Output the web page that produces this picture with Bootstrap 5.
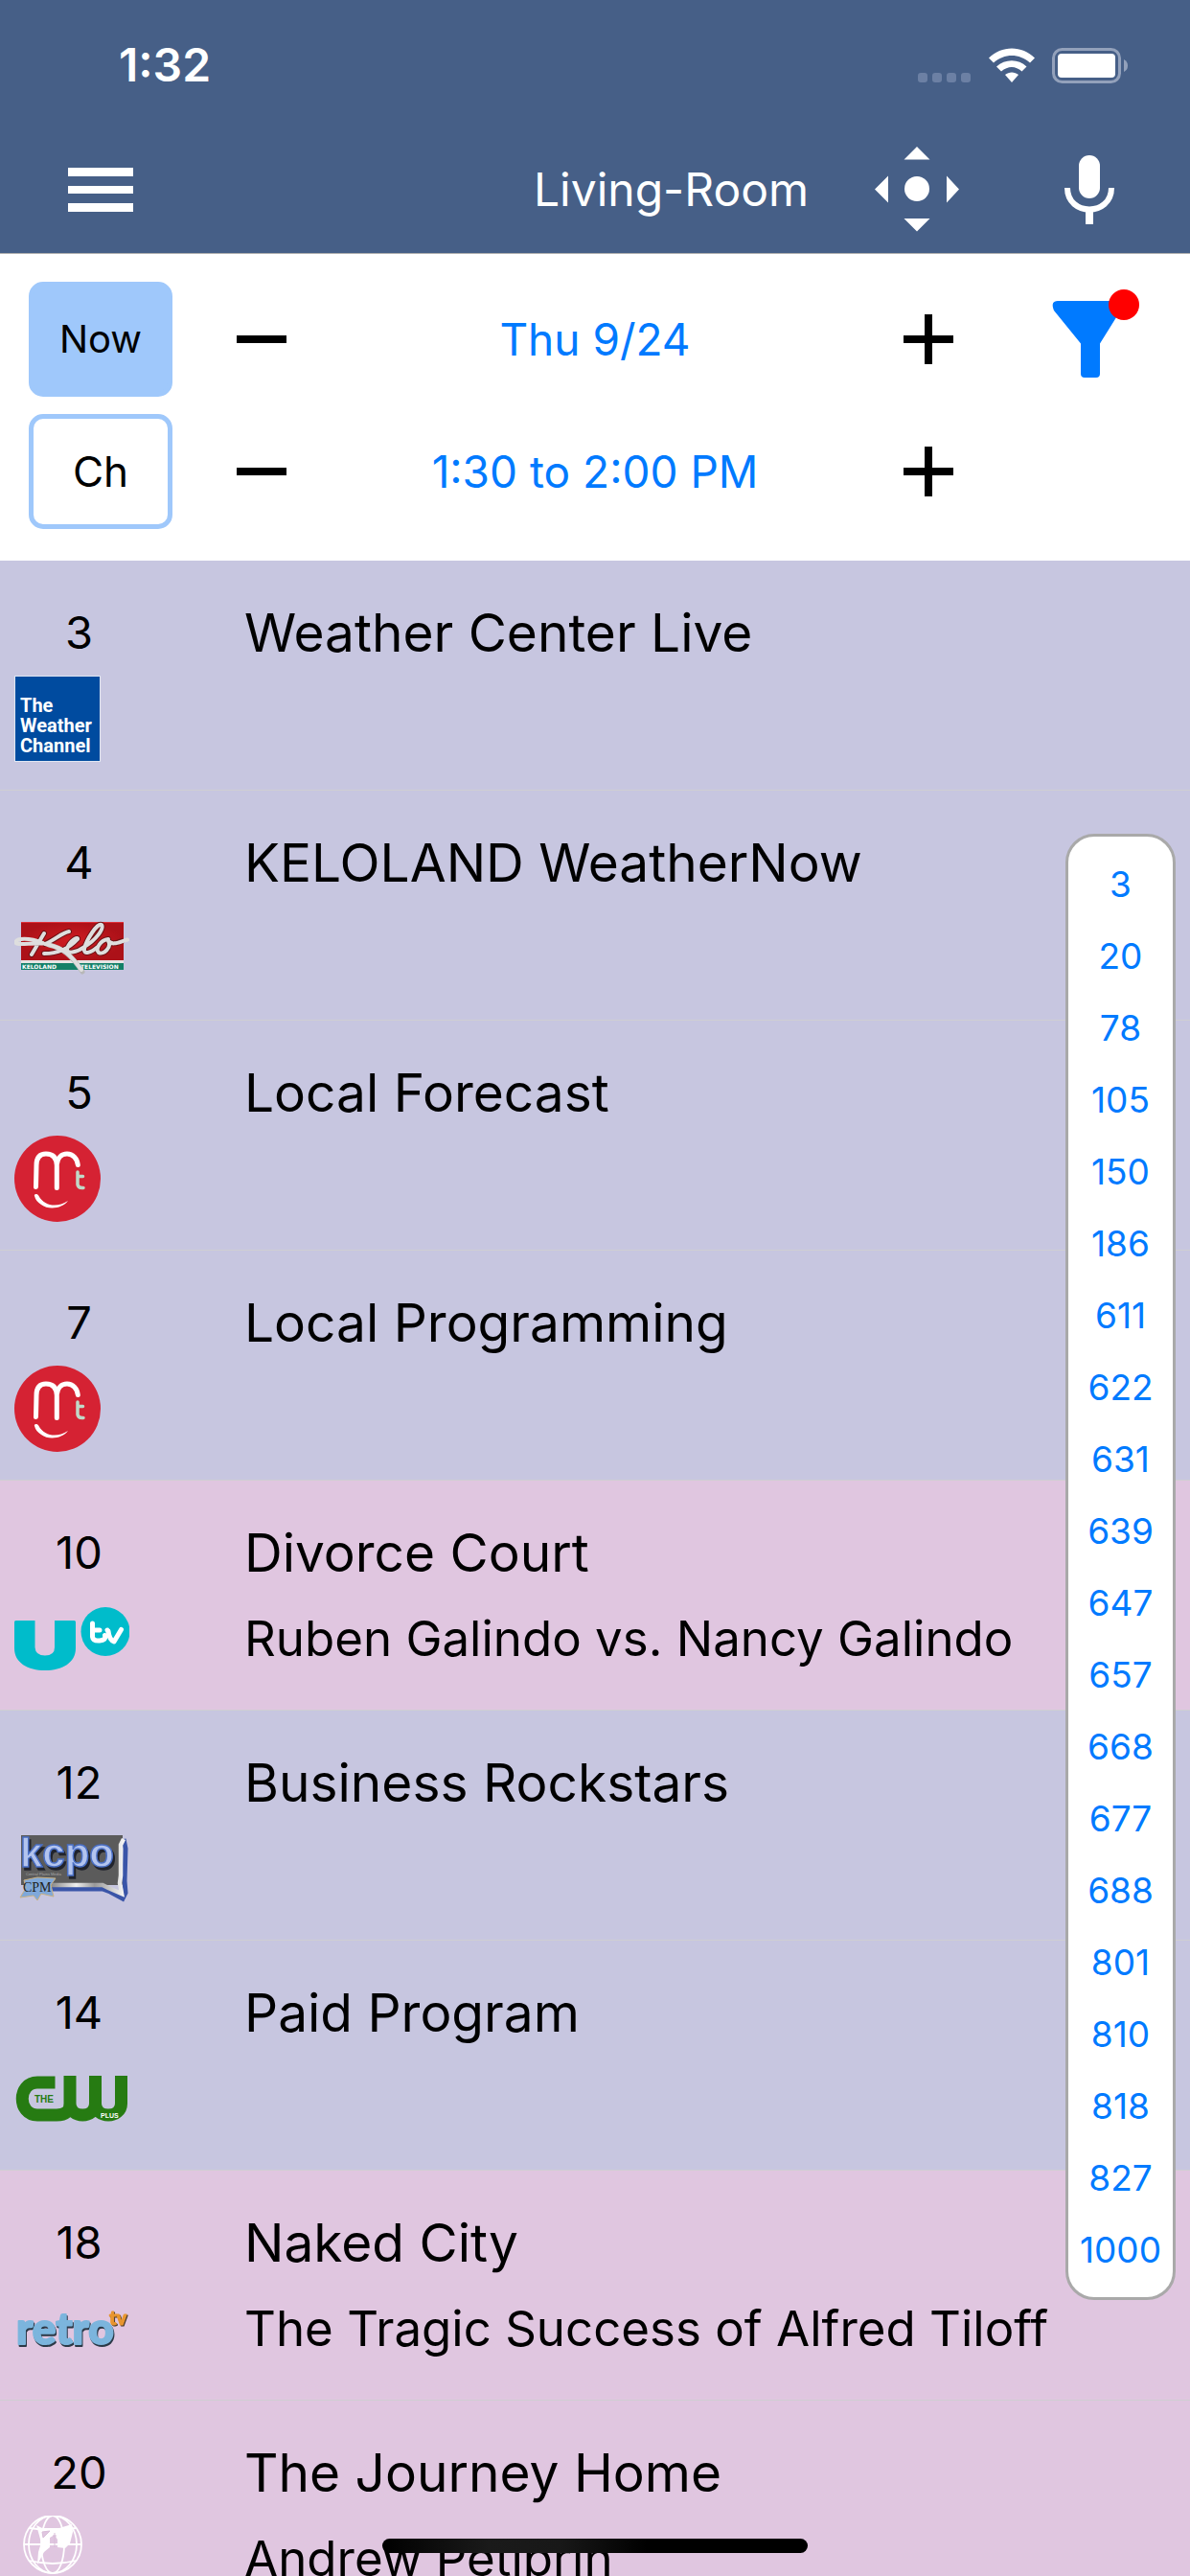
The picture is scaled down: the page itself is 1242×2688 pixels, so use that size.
<!DOCTYPE html>
<html lang="en">
<head>
<meta charset="utf-8">
<meta name="viewport" content="width=device-width, initial-scale=1">
<title>Living-Room</title>
<link rel="stylesheet" href="https://cdn.jsdelivr.net/npm/bootstrap@5.3.0/dist/css/bootstrap.min.css">
<style>
  body { font-family: Inter, "Liberation Sans", sans-serif; color: #000; }
  svg { display: block; flex: none; }
  .top-area { background: #465f87; }
  .status-bar { height: 132px; padding: 4px 64px 0 124px; }
  .clock { font-size: 48px; font-weight: 600; line-height: 60px; }
  .toolbar { height: 132px; padding: 0 30px; }
  .room-title { font-size: 48px; line-height: 60px; padding-right: 38px; }
  .icon-btn { width: 150px; height: 120px; padding: 0; border: 0; background: none; display: flex; align-items: center; justify-content: center; }
  .pad-btn { margin-right: 30px; }
  .controls { border-top: 1px solid #b0b0b0; padding: 29px 30px 33px; gap: 18px; }
  .mode-btn { width: 150px; height: 120px; border: 5px solid #9fc8fb; border-radius: 15px; background: #fff; color: #000; font-size: 44px; padding: 0; }
  .mode-btn.on { background: #9fc8fb; font-size: 40px; }
  .step-btn { width: 186px; }
  .range-link { color: #007aff; font-size: 46px; line-height: 60px; text-decoration: none; }
  .filter-dot { position: absolute; width: 32px; height: 32px; background: #f00; top: 8px; right: 23px; }
  .program { border: 0; border-bottom: 1px solid #cfcfd2; border-radius: 0 !important; background: #c7c6e0; color: #000; padding: 30px 15px 29px; gap: 105px; height: 240px; flex: none; }
  .program.movie { background: #e0c6e0; }
  .chan { width: 135px; flex: none; }
  .chan-no { font-size: 47px; line-height: 90px; }
  .show-name { font-size: 55px; line-height: 90px; font-weight: 400; margin: 0; }
  .episode { font-size: 51px; line-height: 90px; margin: 0; }
  .jump { position: absolute; top: 285px; right: 15px; width: 115px; border: 3px solid #a9a9a9; border-radius: 30px; padding: 12px 0; background: #fff; }
  .jump a { color: #007aff; font-size: 37px; line-height: 75px; text-decoration: none; text-align: center; }
  .home-bar { position: absolute; bottom: 24px; left: 50%; width: 444px; height: 15px; margin-left: -222px; border-radius: 8px; background: linear-gradient(90deg, #000, #1a1a1a 25%, #181818 42%, #000 62%); }
</style>
</head>
<body class="vh-100 overflow-hidden d-flex flex-column position-relative">
<svg width="0" height="0" class="position-absolute" aria-hidden="true">
  <symbol id="midco" viewBox="0 0 120 90">
    <circle cx="45" cy="45" r="45" fill="#d52233"/>
    <path d="M22.500 53.500 L23 31 C23 22 27 19 33 19 C40 19 44 23 44.300 31 V54.500 M44.300 30 C45 23 49 19 55 19 C61 19 65.500 24 66.300 30.500" fill="none" stroke="#fff" stroke-width="5" stroke-linecap="round"/>
    <path d="M21 63 C20 61 24 60 25.500 63 C31 73 44 76 56 68 C50 76 36 78 28 72 C24 69 22 67 21 63Z" fill="#fff"/>
    <path d="M66 38 V51 Q66.500 55 72 54.500 M66 42.500 H71.500" fill="none" stroke="#c0d9c8" stroke-width="3.500" stroke-linecap="round"/>
  </symbol>
</svg>

<header class="top-area text-white">
  <div class="status-bar d-flex align-items-center justify-content-between">
    <span class="clock">1:32</span>
    <svg width="220" height="40" viewBox="0 0 220 40" aria-label="Wi-Fi, battery full">
      <g fill="#6c80a4"><rect y="28" x="0" width="10" height="10" rx="3"/><rect y="28" x="15" width="10" height="10" rx="3"/><rect y="28" x="30" width="10" height="10" rx="3"/><rect y="28" x="45" width="10" height="10" rx="3"/></g>
      <g fill="#fff">
        <path d="M74 12.500 C87 -1 109 -1 122 12.500 L117 17.500 C106 7.500 90 7.500 79 17.500Z"/>
        <path d="M82 21.500 C91 13 105 13 113.500 21.500 L108.500 26.500 C102 20.500 94 20.500 87 26.500Z"/>
        <path d="M91 30 C95 26.500 101 26.500 105 30 L98 38Z"/>
        <rect x="146" y="8" width="60" height="25" rx="4"/>
      </g>
      <rect x="141.500" y="3.500" width="69" height="34" rx="9" fill="none" stroke="#93a1bb" stroke-width="3"/>
      <path d="M215 14 Q219 16 219 20.500 Q219 25 215 27Z" fill="#93a1bb"/>
    </svg>
  </div>
  <nav class="toolbar d-flex align-items-center" aria-label="Main">
    <button type="button" class="icon-btn" aria-label="Menu">
      <svg width="68" height="48" viewBox="0 0 68 48" fill="#fff"><path d="M0 1h68v9H0zM0 20h68v8H0zM0 38h68v9H0z"/></svg>
    </button>
    <span class="room-title flex-grow-1 text-end">Living-Room</span>
    <button type="button" class="icon-btn pad-btn" aria-label="Direction pad">
      <svg width="92" height="90" viewBox="0 0 92 90" fill="#fff"><circle cx="46" cy="44" r="13"/><path d="M46 0l13.500 13.500h-27zM46 88.500l13.500-13.500h-27zM2 44.500l14-14v28zM90 44.500l-13-14v28z"/></svg>
    </button>
    <button type="button" class="icon-btn" aria-label="Voice">
      <svg width="52" height="74" viewBox="0 0 52 74" fill="none"><rect x="15" y="1" width="22" height="45" rx="11" fill="#fff"/><path d="M3 35 C3 65 49 65 49 35" stroke="#fff" stroke-width="6"/><path d="M26 58v15" stroke="#fff" stroke-width="8"/></svg>
    </button>
  </nav>
</header>

<section class="controls d-flex flex-column bg-white" aria-label="Guide time">
  <div class="d-flex align-items-center">
    <button type="button" class="mode-btn on">Now</button>
    <button type="button" class="icon-btn step-btn" aria-label="Previous day"><svg width="52" height="8"><rect width="52" height="8"/></svg></button>
    <a href="#" class="range-link flex-grow-1 text-center">Thu 9/24</a>
    <button type="button" class="icon-btn step-btn" aria-label="Next day"><svg width="52" height="52"><path d="M0 22h52v8H0zM22 0h8v52h-8z"/></svg></button>
    <button type="button" class="icon-btn position-relative" aria-label="Filter">
      <svg width="82" height="82" viewBox="0 0 82 82"><path d="M10 1 H72 Q77 1 76 7 L52 45.500 V77 Q52 81 48 81 H36 Q32 81 32 77 V45.500 L4 11 Q0 1 8 1Z" fill="#007aff"/></svg>
      <span class="filter-dot rounded-circle"></span>
    </button>
  </div>
  <div class="d-flex align-items-center">
    <button type="button" class="mode-btn">Ch</button>
    <button type="button" class="icon-btn step-btn" aria-label="Earlier"><svg width="52" height="8"><rect width="52" height="8"/></svg></button>
    <a href="#" class="range-link flex-grow-1 text-center">1:30 to 2:00 PM</a>
    <button type="button" class="icon-btn step-btn" aria-label="Later"><svg width="52" height="52"><path d="M0 22h52v8H0zM22 0h8v52h-8z"/></svg></button>
    <span class="icon-btn"></span>
  </div>
</section>

<main class="position-relative">
  <ul class="list-group list-group-flush">
    <li class="list-group-item program d-flex">
      <div class="chan"><div class="chan-no text-center">3</div>
        <svg width="120" height="90" viewBox="0 0 120 90"><rect x="0.500" y="0.500" width="89" height="89" fill="#004b9f" stroke="#dfe6f3"/><g fill="#fff" font-family="Roboto" font-weight="700" font-size="20"><text x="6" y="38">The</text><text x="6" y="59">Weather</text><text x="6" y="80">Channel</text></g></svg>
      </div>
      <div><h2 class="show-name">Weather Center Live</h2></div>
    </li>
    <li class="list-group-item program d-flex">
      <div class="chan"><div class="chan-no text-center">4</div>
        <svg width="120" height="90" viewBox="0 0 120 90">
          <defs><radialGradient id="kr"><stop offset="0" stop-color="#d01c22"/><stop offset="1" stop-color="#ac1118"/></radialGradient></defs>
          <rect x="7" y="17" width="107" height="40" fill="url(#kr)"/><rect x="7" y="17" width="107" height="1" fill="#e03038"/>
          <rect x="7" y="57" width="107" height="3" fill="#e6e4e4"/><rect x="7" y="60" width="107" height="7" fill="#138068"/>
          <g fill="#fff" font-family="'DejaVu Sans'" font-weight="700" font-size="6"><text x="8" y="66">KELOLAND</text><text x="69" y="66">TELEVISION</text></g>
          <g fill="none" stroke-linecap="round" stroke-linejoin="round">
            <path d="M31 29 L18 51 M57 27 C50 28 42 36 32 40 M31 50 C42 50 55 47 66 35 C67 32 58 36 55 45 C54 51 65 49 73 43 C85 36 94 24 91 20 C87 17 75 36 73 45 C72 52 80 49 87 43 M98 35 C90 36 84 45 88 49 C93 52 102 43 98 37 C103 42 109 38 112 37" stroke="#6d1216" stroke-width="6"/>
            <path d="M36 41 C50 44 60 52 71 69" stroke="#b8b8b8" stroke-width="5"/>
            <path d="M30 39 C15 33 2 34 1.500 38 C1 42 15 39 30 39.500 M31 29 L18 51 M57 27 C50 28 42 36 32 40 L36 41 C50 44 58 50 70 67 M31 50 C42 50 55 47 66 35 C67 32 58 36 55 45 C54 51 65 49 73 43 C85 36 94 24 91 20 C87 17 75 36 73 45 C72 52 80 49 87 43 M98 35 C90 36 84 45 88 49 C93 52 102 43 98 37 C103 42 109 38 118 35.500" stroke="#dedede" stroke-width="4"/>
          </g>
        </svg>
      </div>
      <div><h2 class="show-name">KELOLAND WeatherNow</h2></div>
    </li>
    <li class="list-group-item program d-flex">
      <div class="chan"><div class="chan-no text-center">5</div><svg width="120" height="90"><use href="#midco"/></svg></div>
      <div><h2 class="show-name">Local Forecast</h2></div>
    </li>
    <li class="list-group-item program d-flex">
      <div class="chan"><div class="chan-no text-center">7</div><svg width="120" height="90"><use href="#midco"/></svg></div>
      <div><h2 class="show-name">Local Programming</h2></div>
    </li>
    <li class="list-group-item program movie d-flex">
      <div class="chan"><div class="chan-no text-center">10</div>
        <svg width="120" height="90" viewBox="0 0 120 90"><path d="M1.500 26 H21.500 V54 Q22 62.500 32 62.500 Q42 62.500 42 54 V26 H62.500 Q64 26 64 27.500 V55 C64 70 50 78 32 78 C14 78 0 70 0 55 V27.500 Q0 26 1.500 26Z" fill="#00bccb"/><circle cx="95" cy="37.500" r="25.500" fill="#00bccb"/><path d="M81.500 29 V43 Q82 47.500 89 47 Q96 46.500 94.500 41.500 M82 36 H89 M98 37 Q99 46 104 48 L111.500 35.500 M97 36 L98 38" fill="none" stroke="#fff" stroke-width="5" stroke-linecap="round" stroke-linejoin="round"/></svg>
      </div>
      <div><h2 class="show-name">Divorce Court</h2><p class="episode">Ruben Galindo vs. Nancy Galindo</p></div>
    </li>
    <li class="list-group-item program d-flex">
      <div class="chan"><div class="chan-no text-center">12</div>
        <svg width="120" height="90" viewBox="0 0 120 90">
          <defs><linearGradient id="sil"><stop offset="0" stop-color="#888"/><stop offset=".35" stop-color="#eee"/><stop offset=".6" stop-color="#999"/><stop offset="1" stop-color="#f4f4f4"/></linearGradient></defs>
          <path d="M7 10H113V62H7Z" fill="#5b5b5b"/>
          <path d="M38 66 H92 L100 69 L113 76 L116 70 L115 58 L116 24 L114 14" fill="none" stroke="#3a55a8" stroke-width="5"/>
          <path d="M38 62 H92 L98 65 L112 71 L110 60 L111 52 V20 L114 14" fill="none" stroke="url(#sil)" stroke-width="4.500"/>
          <text x="6" y="43" font-family="'Liberation Sans'" font-weight="700" font-size="42" fill="#b3c4ee" stroke="#4a6fc4" stroke-width="1.500" style="filter:drop-shadow(2px 3px 0 #20232c)">kcpo</text>
          <text x="12" y="52" font-family="'Liberation Sans'" font-size="4" fill="#a8a8a8">Central Plains Media</text>
          <path d="M10 57 L24 54 L43 55 L38 62 L41 74 L28 71 L24 78 L20 73 L6 75 L12 65Z" fill="#7fa8da" stroke="#c9b183" stroke-width="1"/>
          <text x="9" y="69" font-family="'Liberation Serif'" font-size="14" fill="#222">CPM</text>
        </svg>
      </div>
      <div><h2 class="show-name">Business Rockstars</h2></div>
    </li>
    <li class="list-group-item program d-flex">
      <div class="chan"><div class="chan-no text-center">14</div>
        <svg width="120" height="90" viewBox="0 0 120 90"><path d="M42.500 28 H24 C3 28 3 62 24 62 H44 Q58 62 58 50 V21 M58 50 C58 66 84.500 66 84.500 50 V21 M84.500 50 C84.500 66 111.500 66 111.500 50 V21" fill="none" stroke="#267b12" stroke-width="13"/><text x="21" y="49" font-family="'Liberation Sans'" font-weight="700" font-size="10" fill="#267b12">THE</text><text x="90" y="65" font-family="'Liberation Sans'" font-weight="700" font-size="7" fill="#fff">PLUS</text></svg>
      </div>
      <div><h2 class="show-name">Paid Program</h2></div>
    </li>
    <li class="list-group-item program movie d-flex">
      <div class="chan"><div class="chan-no text-center">18</div>
        <svg width="120" height="90" viewBox="0 0 120 90" font-family="Lato" font-weight="900" stroke-linejoin="round"><text x="2" y="61" font-size="46" fill="#7cb5dd" stroke="#7cb5dd" stroke-width="2" style="filter:drop-shadow(1px 2px 0 #2b3947)">retro</text><text x="99" y="41" font-size="20" fill="#e9962f" stroke="#e9962f" stroke-width="1" style="filter:drop-shadow(1px 1px 0 #4a3a2a)">tv</text></svg>
      </div>
      <div><h2 class="show-name">Naked City</h2><p class="episode">The Tragic Success of Alfred Tiloff</p></div>
    </li>
    <li class="list-group-item program movie d-flex">
      <div class="chan"><div class="chan-no text-center">20</div>
        <svg width="120" height="90" viewBox="0 0 120 90"><g fill="none" stroke="#fff" stroke-width="1.800"><circle cx="40" cy="30" r="30"/><ellipse cx="40" cy="30" rx="25" ry="30"/><ellipse cx="40" cy="30" rx="12" ry="30"/><path d="M10 30H70M16 13Q40 17 64 13M16 47Q40 53 64 47"/></g><path d="M23 10 L29 13 H47 L60 9 L61 17 L58 29 L53 34 L45 33 V25 L42 20 L37 23 L37 33 L31 38 L24 51 L25 38 L28 28 L23 10Z" fill="#fff"/><path d="M42 18V33M40 21H44M29 17L37 16L30 23Z" stroke="#d8bdd8" stroke-width="1" fill="#e0c6e0"/></svg>
      </div>
      <div><h2 class="show-name">The Journey Home</h2><p class="episode">Andrew Petiprin</p></div>
    </li>
  </ul>
  <nav class="jump d-flex flex-column" aria-label="Jump to channel">
    <a href="#">3</a><a href="#">20</a><a href="#">78</a><a href="#">105</a><a href="#">150</a><a href="#">186</a><a href="#">611</a><a href="#">622</a><a href="#">631</a><a href="#">639</a><a href="#">647</a><a href="#">657</a><a href="#">668</a><a href="#">677</a><a href="#">688</a><a href="#">801</a><a href="#">810</a><a href="#">818</a><a href="#">827</a><a href="#">1000</a>
  </nav>
</main>
<div class="home-bar" aria-hidden="true"></div>
<script src="https://cdn.jsdelivr.net/npm/bootstrap@5.3.0/dist/js/bootstrap.bundle.min.js"></script>
</body>
</html>
